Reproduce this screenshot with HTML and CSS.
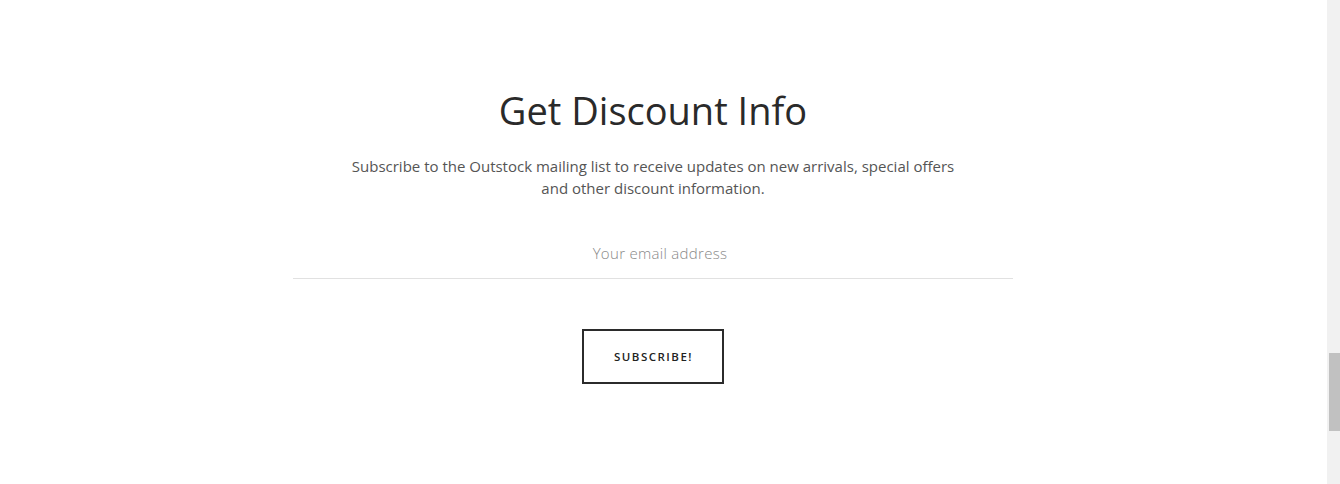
FILE: index.html
```html
<!DOCTYPE html>
<html lang="en">
<head>
<meta charset="utf-8">
<title>Get Discount Info</title>
<link rel="stylesheet" href="styles.css">
</head>
<body>
<div class="page">
  <main class="main">
    <section class="newsletter">
      <h2 class="title">Get Discount Info</h2>
      <p class="lead">Subscribe to the Outstock mailing list to receive updates on new arrivals, special offers<br>and other discount information.</p>
      <form class="form">
        <input class="email" type="email" placeholder="Your email address">
        <button class="btn" type="button">SUBSCRIBE!</button>
      </form>
    </section>
  </main>
  <div class="scrollbar"><div class="thumb"></div></div>
</div>
</body>
</html>
```

FILE: styles.css
```css
* { box-sizing: border-box; }
html, body { margin: 0; padding: 0; background: #fff; }
body { font-family: "Open Sans", "Liberation Sans", sans-serif; }
.page { display: flex; width: 1340px; height: 484px; overflow: hidden; }
.main { flex: 1; display: flex; justify-content: flex-start; }
.newsletter { width: 720px; margin-left: 293px; padding-top: 84px; display: flex; flex-direction: column; align-items: center; }
.title { margin: 0; font-size: 38px; font-weight: 400; color: #2a2a2a; line-height: 52px; }
.lead { margin: 19px 0 0; font-size: 15px; line-height: 22px; color: #555; text-align: center; }
.form { width: 100%; margin-top: 30px; display: flex; flex-direction: column; align-items: center; }
.email { width: 100%; height: 50px; border: 0; border-bottom: 1px solid #e1e1e1; font-family: inherit; font-size: 15px; font-weight: 300; letter-spacing: 0.3px; text-align: center; padding: 0 0 2px 14px; color: #333; outline: none; background: transparent; }
.email::placeholder { color: #888; }
.btn { margin-top: 50px; width: 142px; height: 55px; border: 2px solid #2b2b2b; background: #fff; font-family: inherit; font-size: 11.5px; font-weight: 600; letter-spacing: 1.5px; color: #222; padding: 0 0 0 1px; }
.scrollbar { width: 13px; flex: none; background: #f1f1f1; padding-top: 353px; padding-left: 2px; }
.thumb { width: 11px; height: 78px; background: #c1c1c1; }
```
